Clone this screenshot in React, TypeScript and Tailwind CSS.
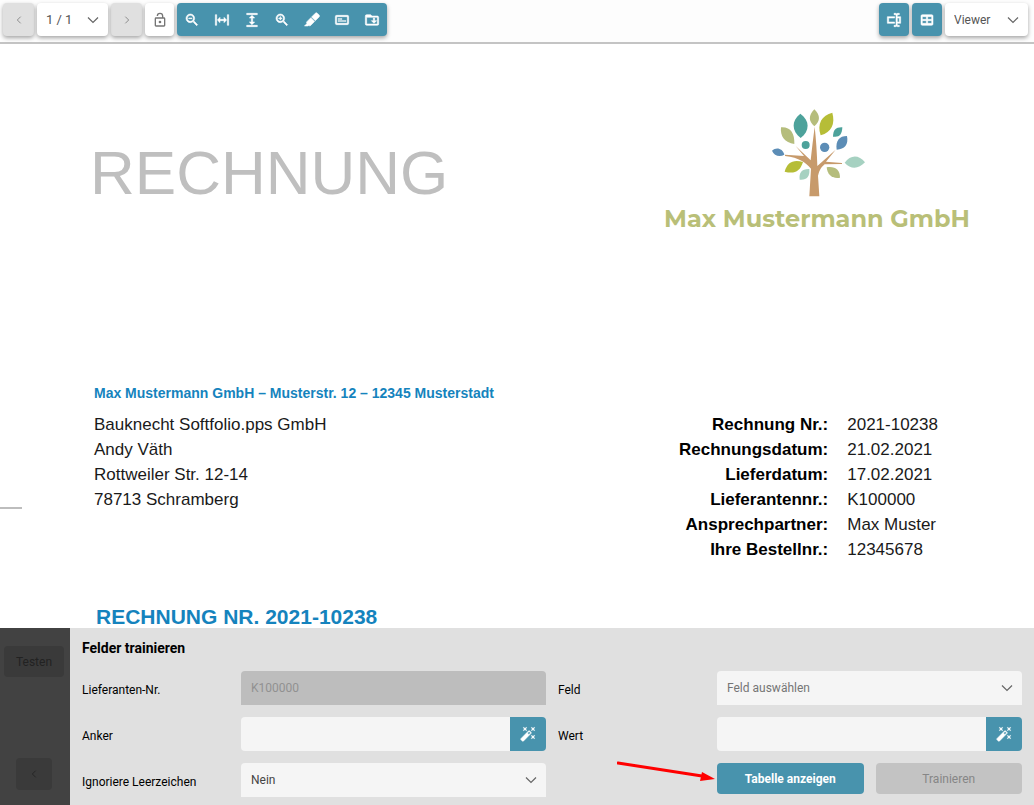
import { useState } from 'react';
import type { ReactNode } from 'react';

// 24 x 24 icon outlines
const icons = {
  lockOpen:
    'M18,20V10H6V20H18M18,8A2,2 0 0,1 20,10V20C20,21.1 19.1,22 18,22H6C4.89,22 4,21.1 4,20V10A2,2 0 0,1 6,8H15V6A3,3 0 0,0 12,3A3,3 0 0,0 9,6H7A5,5 0 0,1 12,1A5,5 0 0,1 17,6V8H18M12,17A2,2 0 0,1 10,15A2,2 0 0,1 12,13A2,2 0 0,1 14,15A2,2 0 0,1 12,17Z',
  zoomOut:
    'M15.5,14H14.71L14.43,13.73C15.41,12.59 16,11.11 16,9.5A6.5,6.5 0 0,0 9.5,3A6.5,6.5 0 0,0 3,9.5A6.5,6.5 0 0,0 9.5,16C11.11,16 12.59,15.41 13.73,14.43L14,14.71V15.5L19,20.5L20.5,19L15.5,14M9.5,14C7,14 5,12 5,9.5C5,7 7,5 9.5,5C12,5 14,7 14,9.5C14,12 12,14 9.5,14M7,9H12V10H7V9Z',
  zoomIn:
    'M15.5,14H14.71L14.43,13.73C15.41,12.59 16,11.11 16,9.5A6.5,6.5 0 0,0 9.5,3A6.5,6.5 0 0,0 3,9.5A6.5,6.5 0 0,0 9.5,16C11.11,16 12.59,15.41 13.73,14.43L14,14.71V15.5L19,20.5L20.5,19L15.5,14M9.5,14C7,14 5,12 5,9.5C5,7 7,5 9.5,5C12,5 14,7 14,9.5C14,12 12,14 9.5,14M12,10H10V12H9V10H7V9H9V7H10V9H12V10Z',
  fitWidth: 'M9,11H15V8L19,12L15,16V13H9V16L5,12L9,8V11M2,20V4H4V20H2M20,20V4H22V20H20Z',
  fitHeight: 'M13,9V15H16L12,19L8,15H11V9H8L12,5L16,9H13M4,2H20V4H4V2M4,20H20V22H4V20Z',
  marker:
    'M18.5,1.15C17.97,1.15 17.46,1.34 17.07,1.73L11.26,7.55L16.91,13.2L22.73,7.39C23.5,6.61 23.5,5.35 22.73,4.56L19.89,1.73C19.5,1.34 19,1.15 18.5,1.15M10.3,8.5L4.34,14.46C3.56,15.24 3.56,16.5 4.36,17.31C3.14,18.54 1.9,19.77 0.67,21H6.33L7.19,20.14C7.97,20.9 9.22,20.89 10,20.12L15.95,14.16Z',
  card: 'M20,5H4A2,2 0 0,0 2,7V17A2,2 0 0,0 4,19H20A2,2 0 0,0 22,17V7A2,2 0 0,0 20,5M20,17H4V7H20V17M6,10H12V11H6V10M6,13H18V14H6V13Z',
  folderDown:
    'M20,18H4V8H20V18M12,6L10,4H4A2,2 0 0,0 2,6V18A2,2 0 0,0 4,20H20A2,2 0 0,0 22,18V8C22,6.89 21.1,6 20,6H12M14,9H16V13H19L15,17L11,13H14V9Z',
  textbox:
    'M17,7H22V17H17V19A1,1 0 0,0 18,20H20V22H17.5C16.95,22 16,21.55 16,21C16,21.55 15.05,22 14.5,22H12V20H14A1,1 0 0,0 15,19V5A1,1 0 0,0 14,4H12V2H14.5C15.05,2 16,2.45 16,3C16,2.45 16.95,2 17.5,2H20V4H18A1,1 0 0,0 17,5V7M2,7H13V9H4V15H13V17H2V7M20,15V9H17V15H20Z',
  table:
    'M5,4H19A2,2 0 0,1 21,6V18A2,2 0 0,1 19,20H5A2,2 0 0,1 3,18V6A2,2 0 0,1 5,4M5,7V11H11V7H5M13,7V11H19V7H13M5,13V17H11V13H5M13,13V17H19V13H13Z',
  wand: 'M7.5,5.6L5,7L6.4,4.5L5,2L7.5,3.4L10,2L8.6,4.5L10,7L7.5,5.6M19.5,15.4L22,14L20.6,16.5L22,19L19.5,17.6L17,19L18.4,16.5L17,14L19.5,15.4M22,2L20.6,4.5L22,7L19.5,5.6L17,7L18.4,4.5L17,2L19.5,3.4L22,2M13.34,12.78L15.78,10.34L13.66,8.22L11.22,10.66L13.34,12.78M14.37,7.29L16.71,9.63C17.1,10 17.1,10.65 16.71,11.04L5.04,22.71C4.65,23.1 4,23.1 3.63,22.71L1.29,20.37C0.9,20 0.9,19.35 1.29,18.96L12.96,7.29C13.35,6.9 14,6.9 14.37,7.29Z',
};

type IconName = keyof typeof icons;

const tools: { icon: IconName; label: string }[] = [
  { icon: 'zoomOut', label: 'Verkleinern' },
  { icon: 'fitWidth', label: 'Breite anpassen' },
  { icon: 'fitHeight', label: 'Höhe anpassen' },
  { icon: 'zoomIn', label: 'Vergrößern' },
  { icon: 'marker', label: 'Markieren' },
  { icon: 'card', label: 'Text' },
  { icon: 'folderDown', label: 'Ablegen' },
];

const details = [
  ['Rechnung Nr.:', '2021-10238'],
  ['Rechnungsdatum:', '21.02.2021'],
  ['Lieferdatum:', '17.02.2021'],
  ['Lieferantennr.:', 'K100000'],
  ['Ansprechpartner:', 'Max Muster'],
  ['Ihre Bestellnr.:', '12345678'],
];

const shadow = 'shadow-[0_2px_4px_rgba(0,0,0,0.35)]';
const tealBtn = `flex h-[33px] w-[30px] items-center justify-center rounded bg-[#4893ad] text-white ${shadow}`;
const pageBtn = `flex h-[33px] w-[31px] items-center justify-center rounded bg-[#e0e0e0] text-[#777] ${shadow}`;
const labelCls = 'pt-1 text-[12px] text-black';
const fieldCls = 'h-[34px] w-full min-w-0 bg-[#f5f5f5] px-2.5 text-[12px] outline-none';

export default function App() {
  return (
    <div className="flex h-screen flex-col bg-white font-[Roboto,sans-serif]">
      <Toolbar />
      <Invoice />
      <TrainingPanel />
    </div>
  );
}

function Toolbar() {
  const [page, setPage] = useState('1');
  const [view, setView] = useState('viewer');

  return (
    <header className="flex shrink-0 justify-between border-b-2 border-[#c4c4c4] bg-[#fdfdfd] pt-[3px] pr-1.5 pb-1.5 pl-[3px]">
      <div className="flex gap-[3px]">
        <button type="button" aria-label="Vorherige Seite" className={pageBtn}>
          <Chevron className="h-2 w-2 rotate-90" />
        </button>
        <Select label="Seite" value={page} onChange={setPage} className={`h-[33px] w-[71px] rounded bg-white pl-[9px] text-[13px] text-[#555] ${shadow}`}>
          <option value="1">1 / 1</option>
        </Select>
        <button type="button" aria-label="Nächste Seite" className={pageBtn}>
          <Chevron className="h-2 w-2 -rotate-90" />
        </button>
        <button
          type="button"
          aria-label="Sperren"
          className={`flex h-[33px] w-[29px] items-center justify-center rounded bg-white text-[#757575] ${shadow}`}
        >
          <Icon name="lockOpen" />
        </button>
        <div className={`flex rounded bg-[#4893ad] text-white ${shadow}`}>
          {tools.map((t) => (
            <button key={t.icon} type="button" aria-label={t.label} className="flex h-[33px] w-[30px] items-center justify-center">
              <Icon name={t.icon} bold />
            </button>
          ))}
        </div>
      </div>

      <div className="flex gap-[3px]">
        <button type="button" aria-label="Textfeld" className={tealBtn}>
          <Icon name="textbox" bold />
        </button>
        <button type="button" aria-label="Tabelle" className={tealBtn}>
          <Icon name="table" bold />
        </button>
        <Select label="Ansicht" value={view} onChange={setView} className={`h-[33px] w-[83px] rounded bg-white pl-[9px] text-[12px] text-[#555] ${shadow}`}>
          <option value="viewer">Viewer</option>
        </Select>
      </div>
    </header>
  );
}

function Invoice() {
  return (
    <main className="relative min-h-0 flex-1 overflow-hidden font-['Liberation_Sans',Arial,sans-serif] text-[17px] leading-[25px] text-[#1a1a1a]">
      {/* Fold mark */}
      <div className="absolute top-[463px] left-0 h-0.5 w-[22px] bg-[#bdbdbd]" />

      <div className="flex items-start justify-between pt-16 pr-16 pl-[90px]">
        <h1 className="pt-8 text-[62px] leading-[66px] text-[#bfbfbf]">RECHNUNG</h1>
        <div className="flex flex-col items-center">
          <TreeLogo />
          <p className="pt-2 font-[Montserrat,Inter,sans-serif] text-[24px] leading-[26px] font-bold text-[#b9bf78]">Max Mustermann GmbH</p>
        </div>
      </div>

      <div className="flex items-start justify-between px-[94px] pt-[151px]">
        <div>
          <p className="pb-[9px] text-[14px] leading-5 font-bold text-[#1583bd]">
            Max Mustermann GmbH – Musterstr. 12 – 12345 Musterstadt
          </p>
          <address className="not-italic">
            Bauknecht Softfolio.pps GmbH
            <br />
            Andy Väth
            <br />
            Rottweiler Str. 12-14
            <br />
            78713 Schramberg
          </address>
        </div>
        <table className="mt-[29px]">
          <tbody>
            {details.map(([label, value]) => (
              <tr key={label}>
                <th scope="row" className="p-0 text-right font-bold text-black">
                  {label}
                </th>
                <td className="py-0 pr-0.5 pl-[19px]">{value}</td>
              </tr>
            ))}
          </tbody>
        </table>
      </div>

      <h2 className="pt-10 pl-24 text-[21px] leading-[30px] font-bold text-[#1583bd]">RECHNUNG NR. 2021-10238</h2>
    </main>
  );
}

function TrainingPanel() {
  const [anchor, setAnchor] = useState('');
  const [value, setValue] = useState('');
  const [field, setField] = useState('');
  const [ignoreSpaces, setIgnoreSpaces] = useState('nein');

  return (
    <section className="flex shrink-0 bg-[#e0e0e0]">
      <aside className="flex w-[70px] shrink-0 flex-col justify-between bg-[#424242] pt-[18px] pb-[15px] pl-1">
        <button type="button" className="h-[31px] w-[60px] rounded bg-[#3a3a3a] text-[12px] text-[#222]">
          Testen
        </button>
        <button type="button" aria-label="Zurück" className="ml-3 flex h-8 w-9 items-center justify-center rounded bg-[#3a3a3a] text-[#222]">
          <Chevron className="h-2 w-2 rotate-90" />
        </button>
      </aside>

      <form className="min-w-0 flex-1 px-3 pb-2" onSubmit={(e) => e.preventDefault()}>
        <h2 className="pt-2.5 pb-[13px] text-[14px] leading-5 font-bold text-black">Felder trainieren</h2>

        <div className="grid grid-cols-[147px_1fr_147px_1fr] items-center gap-3">
          <label htmlFor="supplier" className={labelCls}>
            Lieferanten-Nr.
          </label>
          <input id="supplier" disabled value="K100000" className="h-[34px] w-full min-w-0 rounded-t bg-[#bdbdbd] px-2.5 text-[12px] text-[#919191]" />

          <label htmlFor="field" className={labelCls}>
            Feld
          </label>
          <Select id="field" value={field} onChange={setField} className={`${fieldCls} rounded-t text-[#757575]`}>
            <option value="">Feld auswählen</option>
          </Select>

          <label htmlFor="anchor" className={labelCls}>
            Anker
          </label>
          <WandInput id="anchor" value={anchor} onChange={setAnchor} />

          <label htmlFor="value" className={labelCls}>
            Wert
          </label>
          <WandInput id="value" value={value} onChange={setValue} />

          <label htmlFor="spaces" className={labelCls}>
            Ignoriere Leerzeichen
          </label>
          <Select id="spaces" value={ignoreSpaces} onChange={setIgnoreSpaces} className={`${fieldCls} rounded-t text-[#444]`}>
            <option value="nein">Nein</option>
            <option value="ja">Ja</option>
          </Select>

          {/* Arrow pointing at the table button */}
          <div className="relative h-full">
            <svg aria-hidden="true" viewBox="0 0 100 24" className="absolute -top-1 -right-3 h-6 w-[100px]">
              <path d="M1 4 85 17" fill="none" stroke="#f00" strokeWidth="3" strokeLinecap="round" />
              <path d="M98 20 83 22 85 13Z" fill="#f00" />
            </svg>
          </div>

          <div className="grid grid-cols-2 gap-3 self-start">
            <button type="button" className="h-[31px] rounded bg-[#4893ad] text-[12px] font-bold text-white">
              Tabelle anzeigen
            </button>
            <button type="submit" disabled className="h-[31px] rounded bg-[#c3c3c3] text-[12px] text-[#868686]">
              Trainieren
            </button>
          </div>
        </div>
      </form>
    </section>
  );
}

function WandInput({ id, value, onChange }: { id: string; value: string; onChange: (v: string) => void }) {
  return (
    <div className="flex">
      <input id={id} type="text" value={value} onChange={(e) => onChange(e.target.value)} className={`${fieldCls} rounded-l text-[#444]`} />
      <button type="button" aria-label="Auswählen" className="flex h-[34px] w-9 shrink-0 items-center justify-center rounded-r bg-[#4893ad] text-white">
        <Icon name="wand" bold />
      </button>
    </div>
  );
}

function Select({
  id,
  label,
  value,
  onChange,
  className,
  children,
}: {
  id?: string;
  label?: string;
  value: string;
  onChange: (v: string) => void;
  className: string;
  children: ReactNode;
}) {
  return (
    <div className="relative">
      <select id={id} aria-label={label} value={value} onChange={(e) => onChange(e.target.value)} className={`appearance-none ${className}`}>
        {children}
      </select>
      <Chevron className="pointer-events-none absolute inset-y-0 right-[9px] my-auto h-3 w-3 text-[#666]" />
    </div>
  );
}

function Icon({ name, bold }: { name: IconName; bold?: boolean }) {
  return (
    <svg aria-hidden="true" viewBox="0 0 24 24" className="h-4 w-4" fill="currentColor" stroke={bold ? 'currentColor' : 'none'} strokeWidth="0.8">
      <path d={icons[name]} fillRule="evenodd" />
    </svg>
  );
}

function Chevron({ className }: { className: string }) {
  return (
    <svg aria-hidden="true" viewBox="0 0 12 12" className={className} fill="none" stroke="currentColor" strokeWidth="1.2">
      <path d="M1 3.5 6 8.5 11 3.5" />
    </svg>
  );
}

function TreeLogo() {
  return (
    <svg aria-hidden="true" viewBox="51 40 300 270" className="h-[90px] w-[100px]">
      <path
        fill="#c79a6b"
        d="M178 305 183 222C168 204 148 189 105 184V180L162 184 137 154 182 197Q187 150 194 96 200 150 202 214L257 165 228 201 276 205V208L224 209Q208 222 204 243L208 305Z"
      />
      <g fill="#b5bd7c">
        <path d="M193 44C212 62 211 80 193 95 175 80 175 62 193 44Z" />
        <path d="M93 98C122 96 134 116 133 148 104 144 90 126 93 98Z" />
        <path d="M230 218C256 214 270 226 270 249 246 253 232 240 230 218Z" />
      </g>
      <g fill="#b6bd37">
        <path d="M247 54C256 88 245 112 212 122 200 86 216 62 247 54Z" />
        <path d="M104 231C112 202 130 194 159 202 150 232 132 238 104 231Z" />
      </g>
      <g fill="#4da29b">
        <path d="M151 57C180 78 180 108 152 130 124 108 124 78 151 57Z" />
        <path d="M277 98C276 120 268 129 249 126 249 106 258 97 277 98Z" />
        <circle cx="167" cy="151" r="12" />
      </g>
      <g fill="#5c8db6">
        <path d="M291 124C296 150 284 164 260 165 256 138 268 124 291 124Z" />
        <path d="M66 168C80 156 98 162 103 180 90 188 72 184 66 168Z" />
        <circle cx="224" cy="158" r="14" />
      </g>
      <g fill="#a6d1c1">
        <path d="M284 204C302 180 326 180 345 203 325 224 302 224 284 204Z" />
        <path d="M178 223C180 246 170 257 149 255 146 234 156 222 178 223Z" />
      </g>
    </svg>
  );
}
